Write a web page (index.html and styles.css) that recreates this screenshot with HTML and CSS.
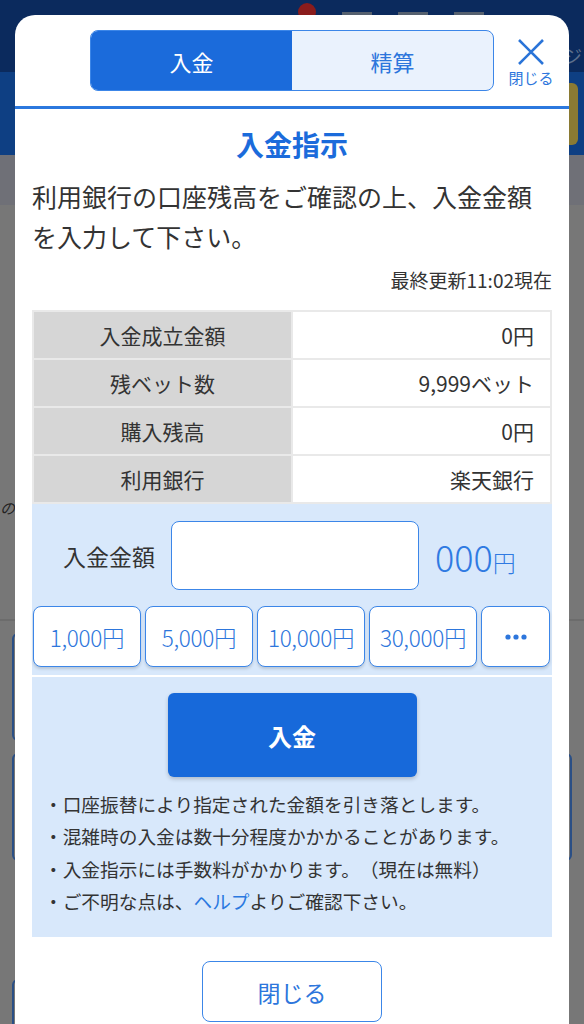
FILE: index.html
```html
<!DOCTYPE html>
<html lang="ja">
<head>
    <meta charset="UTF-8">
    <meta name="viewport" content="width=device-width, initial-scale=1.0">
    <title>入金指示</title>
    <link rel="stylesheet" href="styles.css">
</head>
<body>
    <div class="page">
        <div class="page-top">
            <span class="page-dot"></span>
            <span class="page-stub"></span>
            <span class="page-stub"></span>
            <span class="page-stub"></span>
            <span class="page-kana">ジ</span>
        </div>
        <div class="page-nav">
            <span class="page-gold"></span>
        </div>
        <div class="page-sub"></div>
        <div class="page-body">
            <p class="page-text">の</p>
            <div class="page-rule"></div>
            <div class="page-card page-card-left"></div>
            <div class="page-card"></div>
            <div class="page-card page-card-left page-card-last"></div>
        </div>
    </div>

    <div class="modal">
        <div class="modal-head">
            <div class="tabs">
                <span class="tab tab-active">入金</span>
                <span class="tab">精算</span>
            </div>
            <div class="close-top">
                <svg width="30" height="28" viewBox="0 0 30 28">
                    <path d="M3 2 L27 26 M27 2 L3 26" stroke="#2a74d8" stroke-width="2.6" fill="none"/>
                </svg>
                <span>閉じる</span>
            </div>
        </div>

        <h1 class="title">入金指示</h1>
        <p class="lead">利用銀行の口座残高をご確認の上、入金金額を入力して下さい。</p>
        <p class="updated">最終更新11:02現在</p>

        <table class="info">
            <tr><th>入金成立金額</th><td>0円</td></tr>
            <tr><th>残ベット数</th><td>9,999ベット</td></tr>
            <tr><th>購入残高</th><td>0円</td></tr>
            <tr><th>利用銀行</th><td>楽天銀行</td></tr>
        </table>

        <div class="panel">
            <div class="amount-row">
                <label class="amount-label" for="amount">入金金額</label>
                <input class="amount-input" id="amount" type="text">
                <span class="amount-value">000<small>円</small></span>
            </div>
            <div class="quick">
                <button>1,000円</button>
                <button>5,000円</button>
                <button>10,000円</button>
                <button>30,000円</button>
                <button class="more" aria-label="その他">
                    <svg width="22" height="6" viewBox="0 0 22 6">
                        <circle cx="3" cy="3" r="2.6" fill="#2d76dc"/>
                        <circle cx="11" cy="3" r="2.6" fill="#2d76dc"/>
                        <circle cx="19" cy="3" r="2.6" fill="#2d76dc"/>
                    </svg>
                </button>
            </div>
        </div>
        <div class="panel panel-bottom">
            <button class="deposit">入金</button>
            <ul class="notes">
                <li>・口座振替により指定された金額を引き落とします。</li>
                <li>・混雑時の入金は数十分程度かかかることがあります。</li>
                <li>・入金指示には手数料がかかります。（現在は無料）</li>
                <li>・ご不明な点は、<a href="#">ヘルプ</a>よりご確認下さい。</li>
            </ul>
        </div>

        <div class="foot">
            <button class="close-bottom">閉じる</button>
        </div>
    </div>
</body>
</html>
```

FILE: styles.css
```css
body {
    margin: 0;
    font-family: "Noto Sans CJK JP", "Noto Sans", sans-serif;
    background-color: #777777;
    overflow: hidden;
    text-spacing-trim: space-all;
}

/* dimmed page behind the dialog */
.page {
    height: 1024px;
}

.page-top {
    height: 72px;
    background-color: #0b2a5d;
    display: flex;
    align-items: flex-start;
    gap: 26px;
    padding-left: 298px;
    box-sizing: border-box;
    position: relative;
}

.page-dot {
    width: 18px;
    height: 18px;
    margin-top: 3px;
    border-radius: 50%;
    background-color: #8a1c1c;
}

.page-stub {
    width: 30px;
    height: 20px;
    margin-top: 12px;
    background-color: #55606e;
}

.page-kana {
    position: absolute;
    right: 2px;
    top: 42px;
    font-size: 18px;
    color: #5d6f8c;
}

.page-nav {
    height: 83px;
    background-color: #0e3f83;
    display: flex;
    justify-content: flex-end;
    align-items: center;
}

.page-gold {
    width: 20px;
    height: 62px;
    margin-right: 6px;
    border-radius: 6px;
    background-color: #8a7a33;
}

.page-sub {
    height: 50px;
    background-color: #6f7077;
}

.page-body {
    padding-top: 292px;
}

.page-text {
    margin: 0;
    font-size: 15px;
    line-height: 22px;
    font-style: italic;
    color: #222222;
}

.page-rule {
    margin-top: 100px;
    border-top: 2px solid #6c6c6c;
}

.page-card {
    height: 104px;
    margin: 12px 12px 0;
    border: 2px solid #2a4f86;
    border-radius: 6px;
}

.page-card-left {
    margin-right: 40px;
}

.page-card-last {
    margin-top: 118px;
}

/* dialog */
.modal {
    position: fixed;
    top: 15px;
    left: 15px;
    width: 554px;
    height: 1040px;
    background-color: #ffffff;
    border-radius: 20px 20px 0 0;
    box-sizing: border-box;
}

.modal-head {
    height: 94px;
    display: flex;
    align-items: flex-start;
    border-bottom: 3px solid #2b78de;
    box-sizing: border-box;
    padding-top: 15px;
}

.tabs {
    margin-left: 75px;
    width: 404px;
    height: 61px;
    display: flex;
    border: 1.5px solid #3c86e8;
    border-radius: 8px;
    overflow: hidden;
    box-sizing: border-box;
    background-color: #eaf2fd;
}

.tab {
    flex: 1;
    display: flex;
    align-items: center;
    justify-content: center;
    font-size: 22px;
    color: #2d76dc;
}

.tab-active {
    flex: 0 0 201px;
    background-color: #1b6bdb;
    color: #ffffff;
}

.close-top {
    margin-left: 12px;
    margin-top: 8px;
    width: 50px;
    display: flex;
    flex-direction: column;
    align-items: center;
    color: #2d76dc;
    font-size: 15px;
    line-height: 20px;
}

.close-top svg {
    margin-bottom: 2px;
}

.title {
    margin: 15px 0 0;
    text-align: center;
    font-size: 28px;
    line-height: 40px;
    font-weight: 700;
    color: #1b6bdb;
}

.lead {
    margin: 12px 17px 0;
    font-size: 25px;
    line-height: 40px;
    color: #333333;
}

.updated {
    margin: 12px 17px 0;
    text-align: right;
    font-size: 19px;
    line-height: 24px;
    color: #333333;
}

.info {
    margin: 18px 17px 0;
    width: 520px;
    border-collapse: collapse;
    font-size: 21px;
    color: #333333;
}

.info th,
.info td {
    height: 48px;
    padding: 0 16px;
    border: 2px solid #e9e9e9;
    box-sizing: border-box;
}

.info th {
    width: 259px;
    background-color: #d6d6d6;
    font-weight: 400;
    text-align: center;
}

.info td {
    text-align: right;
}

.panel {
    margin: 0 17px;
    background-color: #d8e8fb;
    padding: 17px 2px 8px 1px;
}

.amount-row {
    display: flex;
    align-items: center;
    padding-left: 30px;
}

.amount-label {
    font-size: 23px;
    color: #333333;
}

.amount-input {
    margin-left: 16px;
    width: 248px;
    height: 69px;
    border: 1.5px solid #3c86e8;
    border-radius: 8px;
    background-color: #ffffff;
    box-sizing: border-box;
}

.amount-value {
    margin-left: 16px;
    font-size: 36px;
    font-weight: 300;
    color: #2f7ae2;
}

.amount-value small {
    font-size: 23px;
}

.quick {
    margin-top: 16px;
    display: grid;
    grid-template-columns: 108px 108px 108px 108px 1fr;
    gap: 4px;
}

.quick button {
    height: 61px;
    padding: 0;
    background-color: #ffffff;
    border: 1.5px solid #3c86e8;
    border-radius: 8px;
    box-shadow: 0 2px 3px rgba(0, 0, 0, 0.15);
    font-family: inherit;
    font-size: 22.5px;
    font-weight: 300;
    color: #2d76dc;
    letter-spacing: -0.3px;
}

.quick .more {
    display: flex;
    align-items: center;
    justify-content: center;
}

.panel-bottom {
    margin-top: 2px;
    padding: 16px 0 20px;
    text-align: center;
}

.deposit {
    width: 249px;
    height: 84px;
    border: none;
    border-radius: 6px;
    background-color: #1769da;
    box-shadow: 0 2px 4px rgba(0, 0, 0, 0.2);
    font-family: inherit;
    font-size: 24px;
    font-weight: 700;
    color: #ffffff;
}

.notes {
    list-style: none;
    margin: 11px 0 0;
    padding: 0 0 0 12px;
    text-align: left;
    font-size: 18.7px;
    line-height: 32.3px;
    color: #333333;
}

.notes a {
    color: #2a78e0;
    text-decoration: none;
}

.foot {
    padding-top: 24px;
    text-align: center;
}

.close-bottom {
    width: 180px;
    height: 61px;
    background-color: #ffffff;
    border: 1.5px solid #3c86e8;
    border-radius: 8px;
    font-family: inherit;
    font-size: 23px;
    color: #2d76dc;
}
```
